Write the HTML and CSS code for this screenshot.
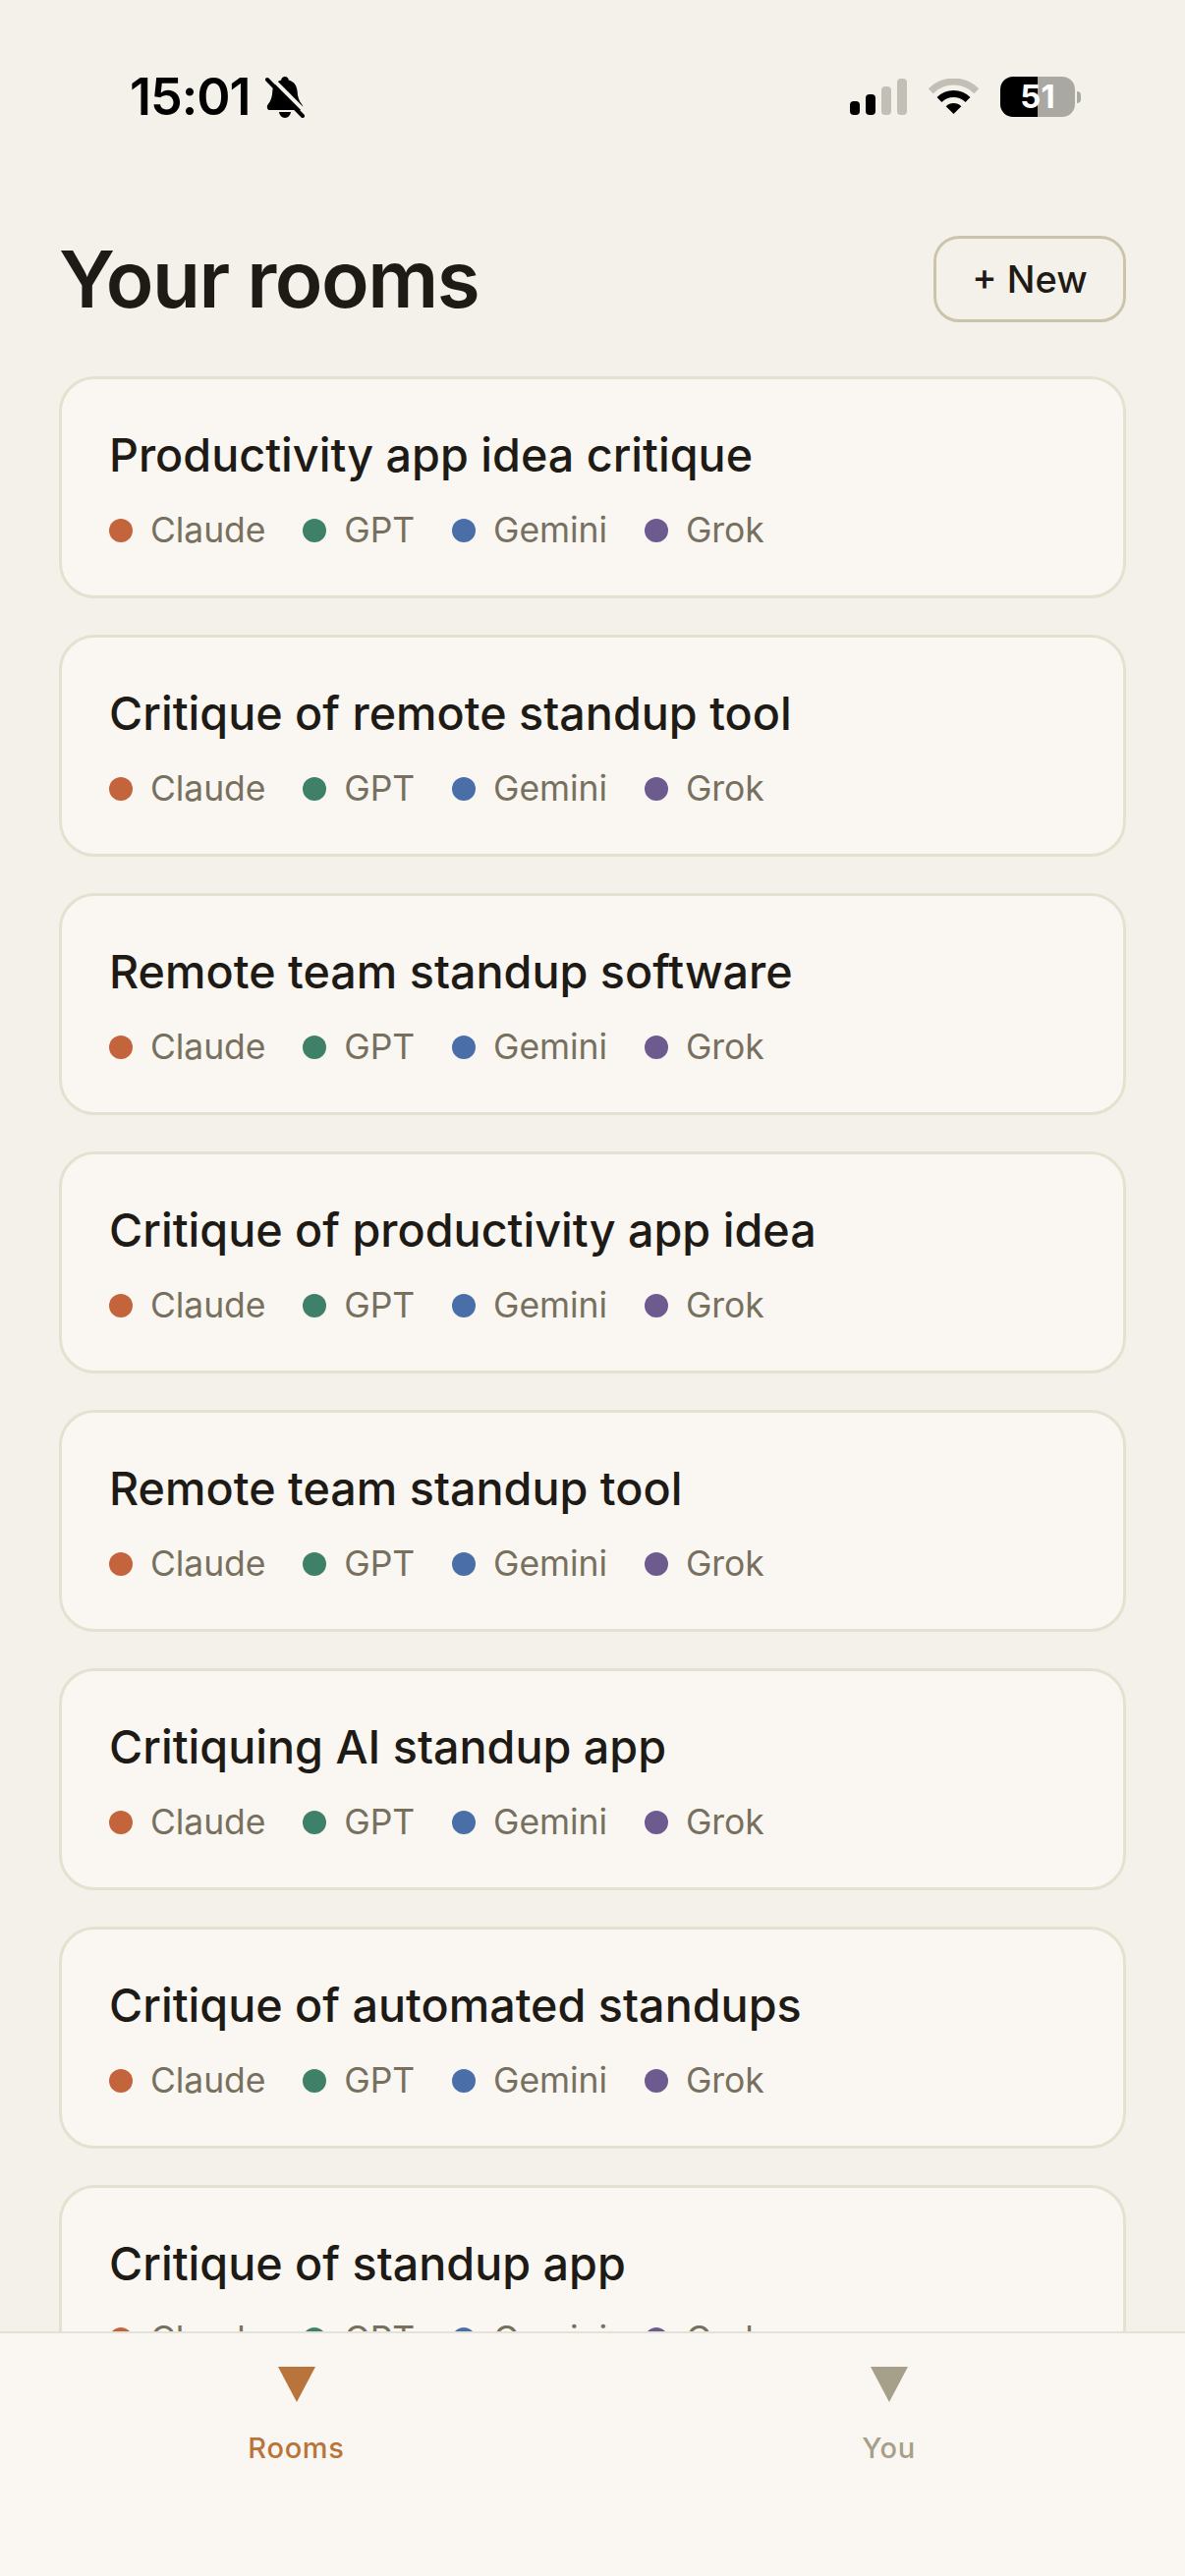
FILE: index.html
```html
<!DOCTYPE html>
<html lang="en">

<head>
    <meta charset="UTF-8" />
    <meta name="viewport" content="width=device-width, initial-scale=1.0" />
    <title>Your rooms</title>
    <link rel="stylesheet" href="styles.css">
</head>

<body>
    <div class="app">
        <div class="status-bar">
            <div class="status-left">
                <span class="clock">15:01</span>
                <svg class="bell" viewBox="0 0 40 42" aria-hidden="true">
                    <path d="M20 0c2.200 0 3.600 1.400 3.800 3.400 5.600 1.500 8.400 6 8.800 11.600.3 5 1.400 9.600 4.600 13.200 1.800 2 1 5.800-1.800 5.800H4.600c-2.800 0-3.600-3.800-1.800-5.800C6 24.600 7 20 7.300 15c.4-5.600 3.300-10.100 8.900-11.600C16.400 1.400 17.800 0 20 0z" />
                    <path d="M14 36h12c-.3 3.200-3 6-6 6s-5.700-2.800-6-6z" />
                    <path class="bell-gap" d="M5 0l37 37" />
                    <path class="bell-slash" d="M2 3l36 37" />
                </svg>
            </div>
            <div class="status-right">
                <div class="signal">
                    <span class="bar bar-1"></span>
                    <span class="bar bar-2"></span>
                    <span class="bar bar-3"></span>
                    <span class="bar bar-4"></span>
                </div>
                <svg class="wifi" viewBox="0 0 51 37" aria-hidden="true">
                    <path class="wifi-off" d="M2.200 12.700a33 33 0 0 1 46.600 0" />
                    <path class="wifi-on" d="M11 21.500a20.500 20.500 0 0 1 29 0" />
                    <path d="M17.700 28.200a11 11 0 0 1 15.600 0L25.500 36z" />
                </svg>
                <div class="battery">
                    <div class="battery-body"><span class="battery-level">51</span></div>
                    <span class="battery-tip"></span>
                </div>
            </div>
        </div>

        <header class="page-head">
            <h1>Your rooms</h1>
            <button class="new-btn" type="button">+ New</button>
        </header>

        <main class="room-list" id="roomList"></main>

        <nav class="tab-bar">
            <a class="tab tab-active" href="#"><span class="tab-icon"></span><span>Rooms</span></a>
            <a class="tab" href="#"><span class="tab-icon"></span><span>You</span></a>
        </nav>
    </div>

    <script>
        const rooms = [
            'Productivity app idea critique',
            'Critique of remote standup tool',
            'Remote team standup software',
            'Critique of productivity app idea',
            'Remote team standup tool',
            'Critiquing AI standup app',
            'Critique of automated standups',
            'Critique of standup app'
        ];
        const models = ['claude', 'gpt', 'gemini', 'grok'];
        const labels = { claude: 'Claude', gpt: 'GPT', gemini: 'Gemini', grok: 'Grok' };
        const roomList = document.getElementById('roomList');

        rooms.forEach(titulo => {
            const card = document.createElement('div');
            card.className = 'room-card';
            const chips = models.map(m =>
                `<span class="model"><span class="dot dot-${m}"></span>${labels[m]}</span>`
            ).join('');
            card.innerHTML = `<div class="room-title">${titulo}</div><div class="room-models">${chips}</div>`;
            roomList.appendChild(card);
        });
    </script>
</body>

</html>
```

FILE: styles.css
```css
:root {
    --fundo: #f4f1ea;
    --cartao: #faf7f2;
    --borda: #e4e1d1;
    --tinta: #1e1a15;
    --cinza: #77705f;
    --ativo: #b8743a;
    --inativo: #a69f8a;
}

* {
    box-sizing: border-box;
}

body {
    margin: 0;
    font-family: Inter, 'Noto Sans', sans-serif;
    background-color: var(--fundo);
    color: var(--tinta);
}

.app {
    display: flex;
    flex-direction: column;
    height: 2622px;
    overflow: hidden;
}

/* status bar */
.status-bar {
    display: flex;
    justify-content: space-between;
    align-items: center;
    height: 77px;
    margin-top: 60px;
    padding: 0 106px 0 132px;
    flex-shrink: 0;
    color: #000;
}

.status-left {
    display: flex;
    align-items: center;
    gap: 15px;
}

.clock {
    font-size: 52px;
    font-weight: 600;
    letter-spacing: -1px;
    line-height: 60px;
}

.bell {
    width: 40px;
    height: 42px;
    fill: #000;
}

.bell-gap {
    stroke: var(--fundo);
    stroke-width: 4;
    fill: none;
}

.bell-slash {
    stroke: #000;
    stroke-width: 4;
    stroke-linecap: round;
    fill: none;
}

.status-right {
    display: flex;
    align-items: center;
}

.signal {
    display: flex;
    align-items: flex-end;
    gap: 6px;
    height: 37px;
}

.bar {
    width: 10px;
    border-radius: 4px;
    background: #000;
}

.bar-1 {
    height: 14px;
}

.bar-2 {
    height: 21px;
}

.bar-3 {
    height: 29px;
    background: #c2bfb7;
}

.bar-4 {
    height: 37px;
    background: #c2bfb7;
}

.wifi {
    width: 51px;
    height: 37px;
    margin-left: 22px;
    fill: #000;
}

.wifi-off,
.wifi-on {
    fill: none;
    stroke-width: 7;
}

.wifi-off {
    stroke: #c2bfb7;
}

.wifi-on {
    stroke: #000;
}

.battery {
    display: flex;
    align-items: center;
    gap: 2px;
    margin-left: 22px;
}

.battery-body {
    display: flex;
    align-items: center;
    justify-content: center;
    width: 76px;
    height: 41px;
    border-radius: 13px;
    background: linear-gradient(to right, #000 50%, #aaa8a3 50%);
}

.battery-level {
    color: #fff;
    font-size: 33px;
    font-weight: 700;
    line-height: 41px;
}

.battery-tip {
    width: 4px;
    height: 12px;
    border-radius: 0 4px 4px 0;
    background: #aaa8a3;
}

/* heading */
.page-head {
    display: flex;
    justify-content: space-between;
    align-items: center;
    flex-shrink: 0;
    height: 88px;
    margin: 103px 60px 0;
}

h1 {
    margin: 0;
    font-size: 80px;
    font-weight: 600;
    letter-spacing: -1.500px;
    line-height: 88px;
}

.new-btn {
    width: 196px;
    height: 88px;
    padding: 0;
    border: 3px solid #cbc4ad;
    border-radius: 26px;
    background: transparent;
    color: var(--tinta);
    font-family: inherit;
    font-size: 38px;
    font-weight: 450;
}

/* room cards */
.room-list {
    flex: 1;
    min-height: 0;
    overflow: hidden;
    display: flex;
    flex-direction: column;
    gap: 37px;
    margin-top: 55px;
    padding: 0 60px;
}

.room-card {
    flex-shrink: 0;
    height: 226px;
    padding: 50px 48px 0;
    border: 3px solid var(--borda);
    border-radius: 36px;
    background: var(--cartao);
}

.room-title {
    font-size: 46.700px;
    font-weight: 450;
    line-height: 54px;
}

.room-models {
    display: flex;
    gap: 38px;
    margin-top: 28px;
    color: var(--cinza);
    font-size: 35.500px;
    letter-spacing: -0.100px;
    line-height: 44px;
}

.model {
    display: flex;
    align-items: center;
    gap: 18px;
}

.dot {
    width: 24px;
    height: 24px;
    border-radius: 50%;
}

.dot-claude {
    background: #c4643c;
}

.dot-gpt {
    background: #3f8069;
}

.dot-gemini {
    background: #4a6ea8;
}

.dot-grok {
    background: #6d5b8f;
}

/* bottom tabs */
.tab-bar {
    display: grid;
    grid-template-columns: 1fr 1fr;
    flex-shrink: 0;
    height: 249px;
    padding-top: 34px;
    border-top: 2px solid #e4e1d6;
    background: var(--cartao);
}

.tab {
    display: flex;
    flex-direction: column;
    align-items: center;
    gap: 30px;
    color: var(--inativo);
    font-size: 29px;
    font-weight: 450;
    line-height: 34px;
    letter-spacing: 0.700px;
    text-decoration: none;
}

.tab-icon {
    width: 0;
    height: 0;
    border-left: 19px solid transparent;
    border-right: 19px solid transparent;
    border-top: 36px solid currentColor;
}

.tab-active {
    color: var(--ativo);
}
```
